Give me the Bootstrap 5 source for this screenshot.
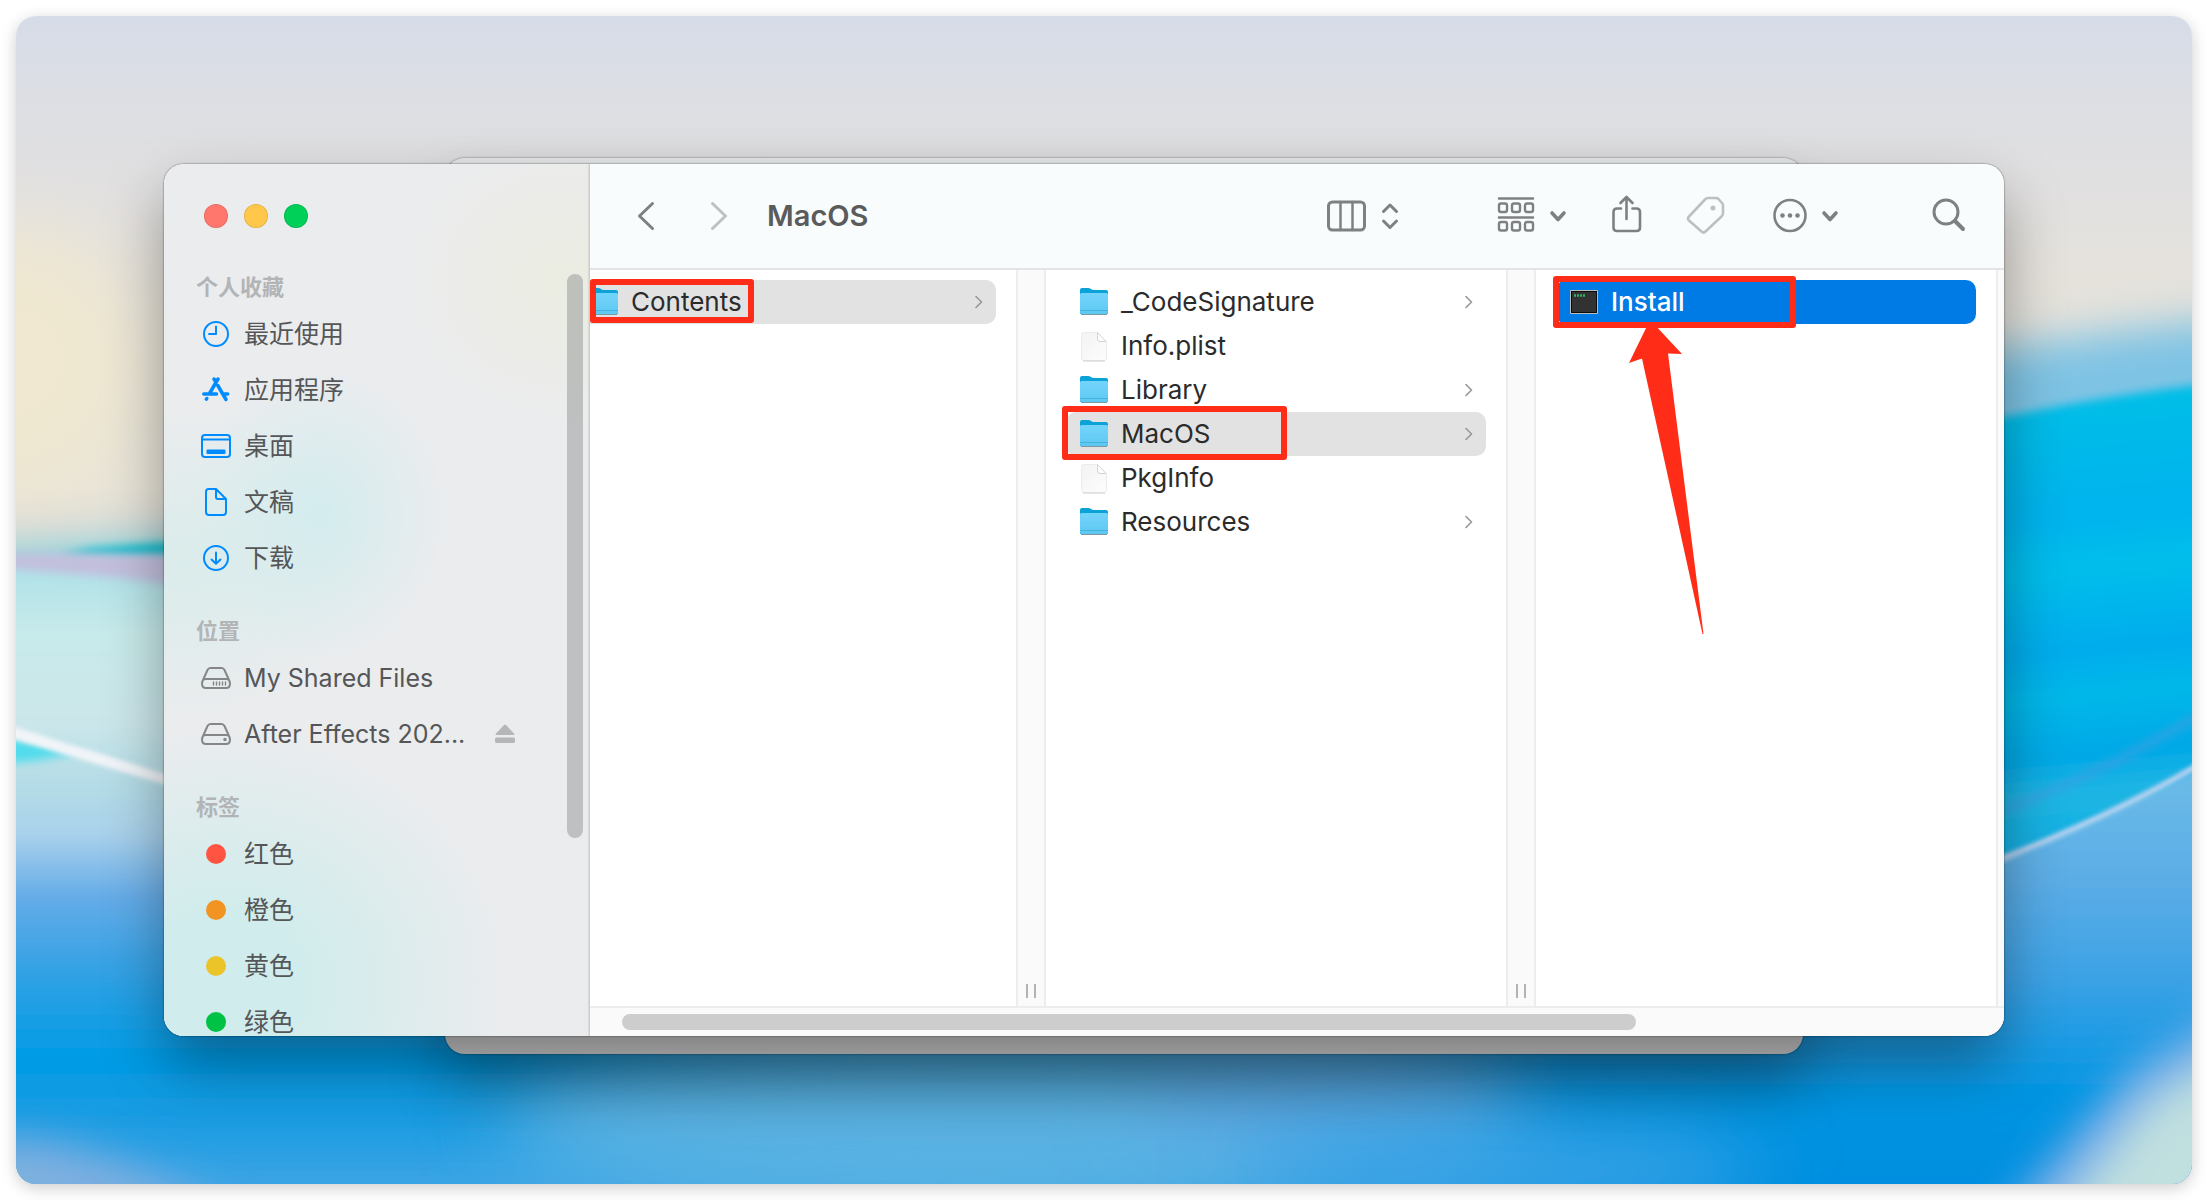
<!DOCTYPE html>
<html lang="zh-CN">
<head>
<meta charset="utf-8">
<meta name="viewport" content="width=device-width, initial-scale=1">
<title>MacOS</title>
<link href="https://cdn.jsdelivr.net/npm/bootstrap@5.3.0/dist/css/bootstrap.min.css" rel="stylesheet">
<script src="https://cdn.jsdelivr.net/npm/bootstrap@5.3.0/dist/js/bootstrap.bundle.min.js"></script>
<style>
  body { font-family: Inter, "Noto Sans CJK SC", sans-serif; font-size: 26px; line-height: 32px; background: #fff; color: #2b2b2b; }
  .desktop { min-width: 0; border-radius: 20px; box-shadow: 0 4px 16px rgba(0,0,0,.2); isolation: isolate; padding: 148px 188px 148px 148px; }
  .wallpaper { z-index: -2; }
  .back-window { z-index: -1; inset: 142px 389px 130px 429px; border-radius: 20px; background: linear-gradient(#e3e5e7, #bdbdbd 90%, #c6c6c6); box-shadow: 0 0 2px rgba(0,0,0,.6), 0 34px 60px rgba(0,0,0,.28); }
  .finder { border-radius: 20px; box-shadow: 0 0 2px rgba(0,0,0,.65), 0 30px 60px rgba(0,0,0,.36); background: #fff; }
  .side-pane { width: 426px; flex: none; height: 872px; padding-top: 40px; color: #555657;
    background:
      radial-gradient(ellipse 130px 150px at 155px 350px, #d3ecee, rgba(211,236,238,0)),
      radial-gradient(ellipse 180px 160px at 20px 400px, rgba(211,236,234,.7), rgba(211,236,234,0)),
      radial-gradient(ellipse 170px 150px at 400px 115px, #ebece1, rgba(235,236,225,0)),
      radial-gradient(ellipse 290px 260px at 60px 820px, #d0ecec 25%, rgba(208,236,236,0)),
      #ebecee; }
  .lights { gap: 16px; padding-left: 40px; margin-bottom: 40px; }
  .light { width: 24px; height: 24px; border-radius: 50%; border: 1px solid rgba(0,0,0,.1); padding: 0; }
  .light-red { background: #ff776d; } .light-yellow { background: #ffc84a; } .light-green { background: #00cf58; }
  .group-title { font-size: 22px; line-height: 38px; font-weight: 700; color: #b2b4b6; padding-left: 32px; margin: 0; }
  .side-list + .group-title { margin-top: 26px; }
  .side-link { height: 56px; gap: 13px; padding-left: 37px; color: inherit; text-decoration: none; font-size: 25px; }
  .side-link svg { flex: none; fill: none; stroke: #008cff; stroke-width: 2; stroke-linecap: round; stroke-linejoin: round; }
  .side-link .drive { stroke: #858688; }
  .eject-btn { border: 0; background: none; padding: 0; margin: 0 75px 0 auto; line-height: 0; }
  .tag-dot { width: 20px; height: 20px; border-radius: 50%; margin: 0 5px; }
  .side-thumb { right: 7px; top: 110px; width: 16px; height: 564px; border-radius: 8px; background: rgba(145,148,148,.5); }
  .main-pane { min-width: 0; box-shadow: -1px 0 2px rgba(0,0,0,.2); z-index: 1; }
  .tool-strip { height: 106px; background: #f8fcfd; border-bottom: 2px solid #e2e4e5; padding: 0 38px 0 36px; }
  .tool-strip button { border: 0; background: none; padding: 0; line-height: 0; }
  .tool-strip svg { fill: none; stroke: #7f8081; stroke-width: 3; stroke-linecap: round; stroke-linejoin: round; overflow: visible; }
  .tool-strip .dim { opacity: .48; }
  .nav-gap { gap: 33px; }
  .tool-gap { gap: 40px; }
  .spaced { margin-right: 40px; }
  .window-title { font-size: 29px; font-weight: 600; color: #5a5b5c; margin: 0 0 0 28px; line-height: 36px; }
  .columns { background: #fff; }
  .file-col { width: 460px; flex: none; padding: 10px 20px 0; }
  .gutter { width: 30px; flex: none; background: #fafafa; border: solid #ededed; border-width: 0 2px; gap: 6px; padding-bottom: 8px; }
  .gutter i { width: 2px; height: 14px; background: #b3b3b3; }
  .gutter-end { width: 8px; flex: none; background: #fafafa; border-left: 2px solid #ededed; }
  .file-row { height: 44px; gap: 13px; padding: 0 13px 0 14px; border-radius: 10px; color: inherit; text-decoration: none; }
  .file-row.current { background: #e2e2e2; }
  .file-row.active { background: #007ae5; color: #fff; }
  .file-row svg { flex: none; }
  .bar-track { height: 30px; border-top: 2px solid #ededed; background: #fafafa; padding: 6px 32px; }
  .bar-thumb { width: 1014px; height: 16px; border-radius: 8px; background: #cdcdcd; }
  .callout { border: 6px solid #ff2d17; border-radius: 3px; pointer-events: none; }
  .callout-contents { left: 14px; top: -1px; width: 164px; height: 44px; }
  .callout-macos { left: -4px; top: -6px; width: 225px; height: 54px; }
  .callout-install { left: -3px; top: -4px; width: 243px; height: 52px; }
  .callout-arrow { left: 70px; top: 38px; pointer-events: none; }
</style>
</head>
<body>
<svg width="0" height="0" class="position-absolute" aria-hidden="true">
  <defs>
    <linearGradient id="folderFront" x1="0" y1="0" x2="0" y2="1"><stop offset="0" stop-color="#74d4fb"/><stop offset="1" stop-color="#5dc8f1"/></linearGradient>
    <linearGradient id="paper" x1="0" y1="0" x2="1" y2="1"><stop offset="0" stop-color="#f3f3f3"/><stop offset="1" stop-color="#fdfdfd"/></linearGradient>
    <symbol id="folder" viewBox="0 0 28 30">
      <path d="M0 27V3Q0 1 2 1H8Q10 1 11 2T14 3H26Q28 3 28 5V27Z" fill="#0ba2d8"/>
      <path d="M0 7.500Q0 6 1.500 6H26.500Q28 6 28 7.500V25.500Q28 27 26.500 27H1.500Q0 27 0 25.500Z" fill="url(#folderFront)"/>
      <path d="M0 23.500H28" stroke="#45b3df" stroke-width="1"/><path d="M1 27.500H27" stroke="#7a9aa6" stroke-width="1"/>
    </symbol>
    <symbol id="file" viewBox="0 0 28 32">
      <path d="M3.500 2.500H17L26.500 12V28Q26.500 30.500 24.500 30.500H3.500Q1.500 30.500 1.500 28V4.500Q1.500 2.500 3.500 2.500Z" fill="url(#paper)" stroke="#ececec"/>
      <path d="M17.500 2.500V9Q17.500 11.500 20 11.500H26Z" fill="#fff" stroke="#d4d4d4"/><path d="M3 31H25" stroke="#cfcfcf"/>
    </symbol>
    <symbol id="chev" viewBox="0 0 8 14"><path d="M1 1.500L6.500 7L1 12.500" fill="none" stroke="#979797" stroke-width="1.600" stroke-linecap="round" stroke-linejoin="round"/></symbol>
  </defs>
</svg>
<div class="min-vh-100 p-3 d-flex">
<div class="desktop position-relative flex-grow-1">
  <svg class="wallpaper position-absolute top-0 start-0 w-100 h-100" style="border-radius:20px" viewBox="16 16 2176 1168" preserveAspectRatio="none" aria-hidden="true">
    <defs>
      <linearGradient id="sky" x1="0" y1="0" x2="0" y2="1"><stop offset="0" stop-color="#d6dce8"/><stop offset=".07" stop-color="#dcdee3"/><stop offset=".14" stop-color="#e1e0e1"/><stop offset=".21" stop-color="#e5e2dd"/><stop offset=".28" stop-color="#e6e2da"/><stop offset=".4" stop-color="#e8e4d8"/><stop offset=".5" stop-color="#d5d2d5"/></linearGradient>
      <linearGradient id="seaR" gradientUnits="userSpaceOnUse" x1="2060" y1="380" x2="2100" y2="830"><stop offset="0" stop-color="#00c0e6"/><stop offset=".3" stop-color="#00b3ed"/><stop offset=".42" stop-color="#00beeb"/><stop offset=".6" stop-color="#00acec"/><stop offset=".7" stop-color="#00b8e9"/><stop offset=".83" stop-color="#00a8e6"/><stop offset=".92" stop-color="#20b6e3"/><stop offset="1" stop-color="#12b0e2"/></linearGradient>
      <linearGradient id="lowR" gradientUnits="userSpaceOnUse" x1="0" y1="790" x2="0" y2="1184"><stop offset="0" stop-color="#69b9e7"/><stop offset=".25" stop-color="#5aace6"/><stop offset=".48" stop-color="#3ca2e5"/><stop offset=".78" stop-color="#0095e2"/><stop offset="1" stop-color="#008fe0"/></linearGradient>
      <linearGradient id="lowL" gradientUnits="userSpaceOnUse" x1="0" y1="560" x2="0" y2="1184"><stop offset="0" stop-color="#abe0e8"/><stop offset=".12" stop-color="#c8eaea"/><stop offset=".26" stop-color="#cbe6ea"/><stop offset=".36" stop-color="#b4dce6"/><stop offset=".44" stop-color="#a9d1eb"/><stop offset=".54" stop-color="#65ace8"/><stop offset=".65" stop-color="#36a2e4"/><stop offset=".8" stop-color="#009be5"/><stop offset=".9" stop-color="#1c9ce2"/><stop offset="1" stop-color="#3aa4e4"/></linearGradient>
      <linearGradient id="fadeR" x1="0" y1="0" x2="1" y2="0"><stop offset="0" stop-color="#fff" stop-opacity="0"/><stop offset="1" stop-color="#fff"/></linearGradient>
      <mask id="joinR" maskUnits="userSpaceOnUse" x="1000" y="700" width="1300" height="560"><rect x="1000" y="700" width="600" height="560" fill="url(#fadeR)"/><rect x="1600" y="700" width="700" height="560" fill="#fff"/></mask>
      <filter id="b2" x="-20%" y="-20%" width="140%" height="140%"><feGaussianBlur stdDeviation="2"/></filter>
      <filter id="b5" x="-20%" y="-50%" width="140%" height="200%"><feGaussianBlur stdDeviation="5"/></filter>
      <filter id="b20" x="-40%" y="-40%" width="180%" height="180%"><feGaussianBlur stdDeviation="20"/></filter>
      <filter id="b40" x="-50%" y="-50%" width="200%" height="200%"><feGaussianBlur stdDeviation="40"/></filter>
    </defs>
    <rect x="16" y="16" width="2176" height="1168" fill="url(#sky)"/>
    <ellipse cx="0" cy="360" rx="140" ry="130" fill="#f0e8d0" filter="url(#b40)"/>
    <path d="M-40 555L300 530V620H-40Z" fill="#7ed3dd" filter="url(#b20)"/>
    <path d="M-20 560H1600V1240H-20Z" fill="url(#lowL)" filter="url(#b5)"/>
    <path d="M90 549L200 540V560L60 555Z" fill="#00bccb" filter="url(#b5)"/>
    <path d="M0 553L200 554V588L120 578L0 568Z" fill="#c3bfdd" filter="url(#b5)"/>
    <path d="M0 736L80 752L40 760L0 764Z" fill="#4fdcec" filter="url(#b5)"/>
    <path d="M0 722L200 785V795L0 735Z" fill="#f1f4f8" filter="url(#b2)"/>
    <path d="M1900 370Q2050 335 2240 318V450H1900Z" fill="#7ec3e4" filter="url(#b20)"/>
    <path d="M1900 440Q2060 400 2240 380V860H1900Z" fill="url(#seaR)" filter="url(#b5)"/>
    <path d="M1990 815Q2090 780 2200 715" fill="none" stroke="#3aa0e3" stroke-width="6" filter="url(#b5)"/>
    <g mask="url(#joinR)"><path d="M1000 1000L1950 882L2004 860Q2120 815 2240 748V1240H1000Z" fill="url(#lowR)" filter="url(#b2)"/></g>
    <path d="M1950 881L2004 858Q2120 812 2200 764" fill="none" stroke="#bdd2f1" stroke-width="6" filter="url(#b2)"/>
    <ellipse cx="1000" cy="1120" rx="500" ry="100" fill="#5ab2e3" filter="url(#b40)"/>
    <ellipse cx="1330" cy="1100" rx="200" ry="50" fill="#5ba8e4" filter="url(#b40)"/>
    <ellipse cx="1500" cy="1170" rx="260" ry="50" fill="#38a2e5" filter="url(#b40)"/>
    <path d="M-20 1140Q80 1130 240 1220H-20Z" fill="#80afe0" filter="url(#b20)"/>
    <path d="M-20 1172L70 1210H-20Z" fill="#74bbd8" filter="url(#b20)"/>
    <path d="M1990 1230L2130 1070L2260 990V1230Z" fill="#78aee9" filter="url(#b20)"/>
    <path d="M2045 1230L2150 1100L2260 1030V1230Z" fill="#c0dfdf" filter="url(#b20)"/>
  </svg>
  <div class="back-window position-absolute"></div>

  <div class="finder d-flex overflow-hidden">
    <aside class="side-pane position-relative overflow-hidden">
      <div class="lights d-flex">
        <button class="light light-red" aria-label="关闭"></button>
        <button class="light light-yellow" aria-label="最小化"></button>
        <button class="light light-green" aria-label="缩放"></button>
      </div>
      <h2 class="group-title">个人收藏</h2>
      <nav class="side-list">
        <a href="#" class="side-link d-flex align-items-center"><svg width="30" height="30" viewBox="0 0 30 30"><circle cx="15" cy="15" r="12"/><path d="M15 7.500V15H8"/></svg>最近使用</a>
        <a href="#" class="side-link d-flex align-items-center"><svg width="30" height="30" viewBox="0 0 30 30"><path stroke-width="3.500" d="M17 4L8.500 18.500M13 4L14 5.700M2.800 19H15.500M22.500 19H26.700M16.800 10.500L25 24.500M5.800 23.500L5.300 24.200"/></svg>应用程序</a>
        <a href="#" class="side-link d-flex align-items-center"><svg width="30" height="30" viewBox="0 0 30 30"><rect x="1" y="4" width="28" height="22" rx="3"/><path d="M1 8.500H29"/><rect x="6.500" y="19.500" width="17" height="2.500" fill="#008cff"/></svg>桌面</a>
        <a href="#" class="side-link d-flex align-items-center"><svg width="30" height="30" viewBox="0 0 30 30"><path d="M7.500 2H15L25 12V25Q25 28 22 28H8Q5 28 5 25V5Q5 2 7.500 2ZM15 2V10Q15 12 17 12H25"/></svg>文稿</a>
        <a href="#" class="side-link d-flex align-items-center"><svg width="30" height="30" viewBox="0 0 30 30"><circle cx="15" cy="15" r="12"/><path d="M15 9.500V20.500M10.500 16.500L15 20.800L19.500 16.500"/></svg>下载</a>
      </nav>
      <h2 class="group-title">位置</h2>
      <nav class="side-list">
        <a href="#" class="side-link d-flex align-items-center"><svg class="drive" width="30" height="30" viewBox="0 0 30 30"><path d="M9.500 5H20.500Q22.500 5 23.500 7L28 17Q29 19 29 20.500Q29 25 25 25H5Q1 25 1 20.500Q1 19 2 17L6.500 7Q7.500 5 9.500 5ZM2 17Q3 16 5 16H25Q27 16 28 17"/><path stroke-width="1.400" d="M12.500 19V22M15.500 19V22M18.500 19V22M21.500 19V22M24.500 19V22"/></svg>My Shared Files</a>
        <div class="d-flex align-items-center">
          <a href="#" class="side-link d-flex align-items-center"><svg class="drive" width="30" height="30" viewBox="0 0 30 30"><path d="M9.500 5H20.500Q22.500 5 23.500 7L28 17Q29 19 29 20.500Q29 25 25 25H5Q1 25 1 20.500Q1 19 2 17L6.500 7Q7.500 5 9.500 5ZM2 17Q3 16 5 16H25Q27 16 28 17"/><circle cx="24" cy="20.500" r=".8"/></svg>After Effects 202...</a>
          <button class="eject-btn" aria-label="推出"><svg width="20" height="20" viewBox="0 0 20 20" fill="#b5b6b8"><path d="M9 1Q10 0 11 1L19 9.500Q20 11 18.500 11H1.500Q0 11 1 9.500Z"/><rect y="13.500" width="20" height="5.500" rx="1.500"/></svg></button>
        </div>
      </nav>
      <h2 class="group-title">标签</h2>
      <nav class="side-list">
        <a href="#" class="side-link d-flex align-items-center"><span class="tag-dot" style="background:#ff5442"></span>红色</a>
        <a href="#" class="side-link d-flex align-items-center"><span class="tag-dot" style="background:#f29422"></span>橙色</a>
        <a href="#" class="side-link d-flex align-items-center"><span class="tag-dot" style="background:#ebc429"></span>黄色</a>
        <a href="#" class="side-link d-flex align-items-center"><span class="tag-dot" style="background:#00c245"></span>绿色</a>
      </nav>
      <div class="side-thumb position-absolute"></div>
    </aside>

    <main class="main-pane flex-grow-1 d-flex flex-column position-relative">
      <header class="tool-strip d-flex align-items-center">
        <div class="nav-gap d-flex">
          <button aria-label="后退"><svg width="40" height="40" viewBox="0 0 40 40"><path d="M26.500 7.500L13.500 20L26.500 32.500"/></svg></button>
          <button aria-label="前进"><svg class="dim" width="40" height="40" viewBox="0 0 40 40"><path d="M13.500 7.500L26.500 20L13.500 32.500"/></svg></button>
        </div>
        <h1 class="window-title">MacOS</h1>
        <div class="tool-gap d-flex ms-auto">
          <button class="spaced" aria-label="显示方式"><svg width="80" height="40" viewBox="0 0 80 40"><rect x="2.500" y="6" width="36" height="28" rx="4"/><path stroke-width="2.500" d="M14.500 6V34M26.500 6V34"/><path d="M57.500 15.500L64 9L70.500 15.500M57.500 25L64 31.500L70.500 25"/></svg></button>
          <button aria-label="分组"><svg width="80" height="40" viewBox="0 0 80 40"><path stroke-width="2.600" d="M13 2.500H47M13 21.500H47"/><g stroke-width="2.400"><rect x="13" y="7.500" width="8" height="8.500" rx="2"/><rect x="26" y="7.500" width="8" height="8.500" rx="2"/><rect x="39" y="7.500" width="8" height="8.500" rx="2"/><rect x="13" y="26" width="8" height="8.500" rx="2"/><rect x="26" y="26" width="8" height="8.500" rx="2"/><rect x="39" y="26" width="8" height="8.500" rx="2"/></g><path stroke-width="3.600" d="M66 17L72 23.500L78 17"/></svg></button>
          <button aria-label="共享"><svg width="40" height="40" viewBox="0 0 40 40"><path stroke-width="2.600" d="M15 12.500H11Q7.500 12.500 7.500 16V31.500Q7.500 35 11 35H30.500Q34 35 34 31.500V16Q34 12.500 30.500 12.500H26.500M20.500 23V1.500M14.500 7L20.500 1L26.500 7"/></svg></button>
          <button aria-label="标签"><svg class="dim" width="40" height="40" viewBox="0 0 40 40"><path stroke-width="2.600" d="M22 2H30Q31.500 2 32.500 3L36 7Q37 8 37 9.500V17Q37 19 35.500 20.500L19.500 35.500Q17.500 37.500 15.500 35.500L3 24.500Q1 22.500 3 20.500L19 3.500Q20.500 2 22 2Z"/><circle cx="27" cy="12" r="1.500" fill="#7f8081" stroke-width="2"/></svg></button>
          <button class="spaced" aria-label="操作"><svg width="80" height="40" viewBox="0 0 80 40"><circle cx="24" cy="19.500" r="15.500" stroke-width="2.600"/><g fill="#7f8081" stroke="none"><circle cx="16.500" cy="19.500" r="2.300"/><circle cx="24" cy="19.500" r="2.300"/><circle cx="31.500" cy="19.500" r="2.300"/></g><path stroke-width="3.600" d="M58 17L64 23.500L70 17"/></svg></button>
          <button aria-label="搜索"><svg width="40" height="40" viewBox="0 0 40 40"><circle cx="20" cy="16" r="12"/><path stroke-width="4" d="M29 25L37 33"/></svg></button>
        </div>
      </header>
      <div class="columns d-flex flex-grow-1 justify-content-end overflow-hidden">
        <div class="file-col">
          <a href="#" class="file-row current d-flex align-items-center position-relative"><svg width="28" height="30"><use href="#folder"/></svg><span>Contents</span><svg class="ms-auto" width="8" height="14"><use href="#chev"/></svg><span class="callout callout-contents position-absolute"></span></a>
        </div>
        <div class="gutter d-flex justify-content-center align-items-end"><i></i><i></i></div>
        <div class="file-col">
          <a href="#" class="file-row d-flex align-items-center"><svg width="28" height="30"><use href="#folder"/></svg><span>_CodeSignature</span><svg class="ms-auto" width="8" height="14"><use href="#chev"/></svg></a>
          <a href="#" class="file-row d-flex align-items-center"><svg width="28" height="32"><use href="#file"/></svg><span>Info.plist</span></a>
          <a href="#" class="file-row d-flex align-items-center"><svg width="28" height="30"><use href="#folder"/></svg><span>Library</span><svg class="ms-auto" width="8" height="14"><use href="#chev"/></svg></a>
          <a href="#" class="file-row current d-flex align-items-center position-relative"><svg width="28" height="30"><use href="#folder"/></svg><span>MacOS</span><svg class="ms-auto" width="8" height="14"><use href="#chev"/></svg><span class="callout callout-macos position-absolute"></span></a>
          <a href="#" class="file-row d-flex align-items-center"><svg width="28" height="32"><use href="#file"/></svg><span>PkgInfo</span></a>
          <a href="#" class="file-row d-flex align-items-center"><svg width="28" height="30"><use href="#folder"/></svg><span>Resources</span><svg class="ms-auto" width="8" height="14"><use href="#chev"/></svg></a>
        </div>
        <div class="gutter d-flex justify-content-center align-items-end"><i></i><i></i></div>
        <div class="file-col">
          <a href="#" class="file-row active d-flex align-items-center position-relative"><svg width="28" height="24" viewBox="0 0 28 24"><rect width="28" height="24" rx="1" fill="#b9bcbf"/><rect x="1" y="1" width="26" height="22" fill="#0c0c0c"/><rect x="2" y="2" width="24" height="20" fill="#323232"/><path d="M4 5.500H15" stroke="#2fb463" stroke-width="2.500" stroke-dasharray="2 1"/></svg><span class="fw-medium">Install</span><span class="callout callout-install position-absolute"></span>
            <svg class="callout-arrow position-absolute" width="80" height="320" viewBox="0 0 80 320" fill="#ff2d17"><path d="M22 6H28L56 36L42 35.500L77.500 316L76.500 316L16 40.500L3 45Z"/></svg></a>
        </div>
        <div class="gutter-end"></div>
      </div>
      <div class="bar-track"><div class="bar-thumb"></div></div>
    </main>
  </div>
</div>
</div>
</body>
</html>
